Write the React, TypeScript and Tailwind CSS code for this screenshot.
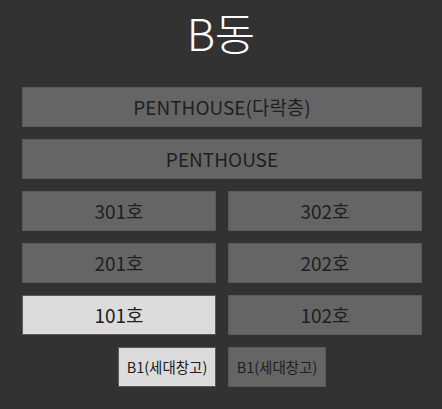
export default function App() {
  const font = { fontFamily: '"Noto Sans CJK KR", "Noto Sans", sans-serif' };
  const base =
    "h-10 flex items-center justify-center border border-[#5a5a5a] text-[#202020]";
  const big = `${base} text-[19px]`;
  const small = `${base} w-[98px] text-[14.5px]`;
  const off = "bg-[#656565]";
  const on = "bg-[#dcdcdc]";
  return (
    <div className="w-[442px] h-[409px] bg-[#323232] flex flex-col items-center" style={font}>
      <h1 className="h-[64px] text-[44px] leading-[64px] font-light text-white">B동</h1>
      <div className="mt-[23px] w-full pl-[22px] pr-[20px] flex flex-col gap-3">
        <button className={`${big} ${off}`}>PENTHOUSE(다락층)</button>
        <button className={`${big} ${off}`}>PENTHOUSE</button>
        <div className="grid grid-cols-2 gap-3">
          <button className={`${big} ${off}`}>301호</button>
          <button className={`${big} ${off}`}>302호</button>
        </div>
        <div className="grid grid-cols-2 gap-3">
          <button className={`${big} ${off}`}>201호</button>
          <button className={`${big} ${off}`}>202호</button>
        </div>
        <div className="grid grid-cols-2 gap-3">
          <button className={`${big} ${on}`}>101호</button>
          <button className={`${big} ${off}`}>102호</button>
        </div>
        <div className="flex justify-center gap-3">
          <button className={`${small} ${on}`}>B1(세대창고)</button>
          <button className={`${small} ${off}`}>B1(세대창고)</button>
        </div>
      </div>
    </div>
  );
}
